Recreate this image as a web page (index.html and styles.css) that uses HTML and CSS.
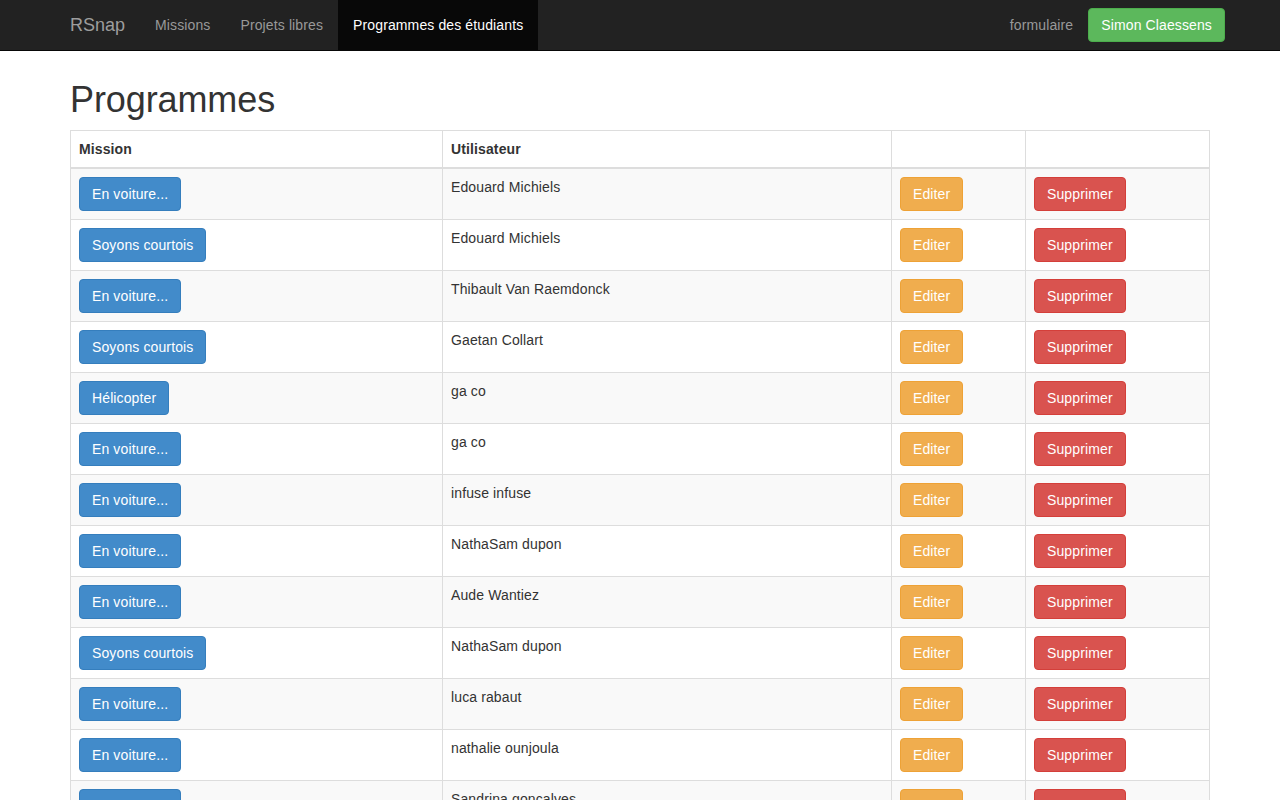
FILE: index.html
```html
<!DOCTYPE html>
<html lang="fr">
<head>
<meta charset="utf-8">
<title>RSnap - Programmes</title>
<link rel="stylesheet" href="styles.css">
</head>
<body>
<nav class="navbar">
  <div class="container nav-inner">
    <div class="nav-left">
      <a class="brand" href="#">RSnap</a>
      <a class="nav-link" href="#">Missions</a>
      <a class="nav-link" href="#">Projets libres</a>
      <a class="nav-link active" href="#">Programmes des étudiants</a>
    </div>
    <div class="nav-right">
      <a class="nav-link" href="#">formulaire</a>
      <a class="btn btn-success" href="#">Simon Claessens</a>
    </div>
  </div>
</nav>
<main class="container">
  <h1>Programmes</h1>
  <table class="table">
    <colgroup>
      <col class="c-mission"><col class="c-user"><col class="c-edit"><col class="c-del">
    </colgroup>
    <thead>
      <tr><th>Mission</th><th>Utilisateur</th><th></th><th></th></tr>
    </thead>
    <tbody>
      <tr><td><a class="btn btn-primary" href="#">En voiture...</a></td><td>Edouard Michiels</td><td><a class="btn btn-warning" href="#">Editer</a></td><td><a class="btn btn-danger" href="#">Supprimer</a></td></tr>
      <tr><td><a class="btn btn-primary" href="#">Soyons courtois</a></td><td>Edouard Michiels</td><td><a class="btn btn-warning" href="#">Editer</a></td><td><a class="btn btn-danger" href="#">Supprimer</a></td></tr>
      <tr><td><a class="btn btn-primary" href="#">En voiture...</a></td><td>Thibault Van Raemdonck</td><td><a class="btn btn-warning" href="#">Editer</a></td><td><a class="btn btn-danger" href="#">Supprimer</a></td></tr>
      <tr><td><a class="btn btn-primary" href="#">Soyons courtois</a></td><td>Gaetan Collart</td><td><a class="btn btn-warning" href="#">Editer</a></td><td><a class="btn btn-danger" href="#">Supprimer</a></td></tr>
      <tr><td><a class="btn btn-primary" href="#">Hélicopter</a></td><td>ga co</td><td><a class="btn btn-warning" href="#">Editer</a></td><td><a class="btn btn-danger" href="#">Supprimer</a></td></tr>
      <tr><td><a class="btn btn-primary" href="#">En voiture...</a></td><td>ga co</td><td><a class="btn btn-warning" href="#">Editer</a></td><td><a class="btn btn-danger" href="#">Supprimer</a></td></tr>
      <tr><td><a class="btn btn-primary" href="#">En voiture...</a></td><td>infuse infuse</td><td><a class="btn btn-warning" href="#">Editer</a></td><td><a class="btn btn-danger" href="#">Supprimer</a></td></tr>
      <tr><td><a class="btn btn-primary" href="#">En voiture...</a></td><td>NathaSam dupon</td><td><a class="btn btn-warning" href="#">Editer</a></td><td><a class="btn btn-danger" href="#">Supprimer</a></td></tr>
      <tr><td><a class="btn btn-primary" href="#">En voiture...</a></td><td>Aude Wantiez</td><td><a class="btn btn-warning" href="#">Editer</a></td><td><a class="btn btn-danger" href="#">Supprimer</a></td></tr>
      <tr><td><a class="btn btn-primary" href="#">Soyons courtois</a></td><td>NathaSam dupon</td><td><a class="btn btn-warning" href="#">Editer</a></td><td><a class="btn btn-danger" href="#">Supprimer</a></td></tr>
      <tr><td><a class="btn btn-primary" href="#">En voiture...</a></td><td>luca rabaut</td><td><a class="btn btn-warning" href="#">Editer</a></td><td><a class="btn btn-danger" href="#">Supprimer</a></td></tr>
      <tr><td><a class="btn btn-primary" href="#">En voiture...</a></td><td>nathalie ounjoula</td><td><a class="btn btn-warning" href="#">Editer</a></td><td><a class="btn btn-danger" href="#">Supprimer</a></td></tr>
      <tr><td><a class="btn btn-primary" href="#">En voiture...</a></td><td>Sandrina goncalves</td><td><a class="btn btn-warning" href="#">Editer</a></td><td><a class="btn btn-danger" href="#">Supprimer</a></td></tr>
    </tbody>
  </table>
</main>
</body>
</html>
```
FILE: styles.css
```css
* { box-sizing: border-box; }
html, body { margin: 0; padding: 0; }
body {
  font-family: "Liberation Sans", Arial, Helvetica, sans-serif;
  font-size: 14px;
  line-height: 1.42857;
  letter-spacing: 0.12px;
  color: #333;
  background: #fff;
}
a { text-decoration: none; }
.container {
  width: 1170px;
  margin: 0 auto;
  padding: 0 15px;
}
.navbar {
  background: #222;
  border-bottom: 1px solid #080808;
  height: 51px;
}
.nav-inner {
  display: flex;
  justify-content: space-between;
  align-items: stretch;
  height: 50px;
}
.nav-left, .nav-right {
  display: flex;
  align-items: center;
  height: 50px;
}
.nav-left { margin-left: -15px; }
.nav-right { margin-right: -15px; }
.brand {
  color: #9d9d9d;
  font-size: 18px;
  line-height: 20px;
  letter-spacing: 0;
  padding: 15px;
  height: 50px;
}
.nav-link {
  color: #999;
  padding: 15px;
  line-height: 20px;
  height: 50px;
}
.nav-link.active {
  color: #fff;
  background: #080808;
}
.btn {
  display: inline-block;
  padding: 6px 12px;
  font-size: 14px;
  line-height: 20px;
  border: 1px solid transparent;
  border-radius: 4px;
  color: #fff;
  white-space: nowrap;
  vertical-align: middle;
}
.btn-success { background: #5cb85c; border-color: #4cae4c; }
.btn-primary { background: #428bca; border-color: #357ebd; }
.btn-warning { background: #f0ad4e; border-color: #eea236; }
.btn-danger  { background: #d9534f; border-color: #d43f3a; }

h1 {
  font-size: 36px;
  font-weight: 500;
  line-height: 1.1;
  letter-spacing: -0.1px;
  margin: 29px 0 10px;
  color: #333;
}
.table {
  width: 1140px;
  border-collapse: collapse;
  border-spacing: 0;
  table-layout: fixed;
  border: 1px solid #ddd;
  margin-bottom: 20px;
}
.c-mission { width: 372px; }
.c-user { width: 449px; }
.c-edit { width: 134px; }
.c-del { width: 184px; }
.table th, .table td {
  padding: 8px;
  border: 1px solid #ddd;
  text-align: left;
  vertical-align: top;
  line-height: 20px;
}
.table th {
  font-weight: bold;
  border-bottom-width: 2px;
}
.table tbody tr:nth-child(odd) td { background: #f9f9f9; }
```
